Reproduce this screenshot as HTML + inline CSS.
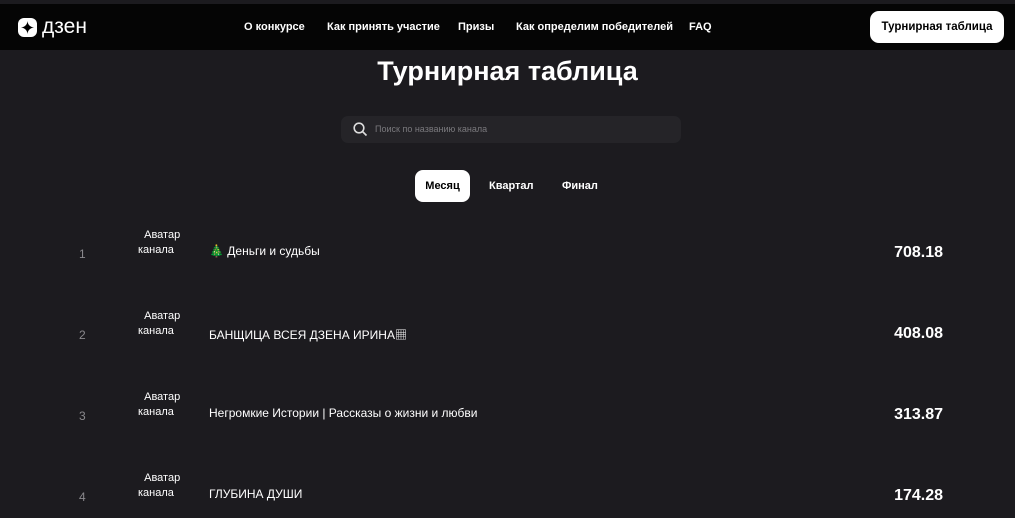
<!DOCTYPE html>
<html><head><meta charset="utf-8"><style>
*{margin:0;padding:0;box-sizing:border-box}
body{width:1015px;height:518px;overflow:hidden;background:#1c1b1f;font-family:"Liberation Sans","Noto Sans CJK SC",sans-serif;color:#fff;position:relative}
.hdr{position:absolute;left:0;top:4px;width:1015px;height:46px;background:#050505}
.logo{position:absolute;left:18px;top:14px;width:19px;height:19px;background:#fff;border-radius:6px}
.logo svg{position:absolute;left:3px;top:3px}
.lt{position:absolute;left:42px;top:11px;font-size:21px}
.nav{position:absolute;top:17px;font-size:11px;font-weight:bold}
.btn{position:absolute;left:870px;top:7px;width:134px;height:32px;background:#fff;color:#000;border-radius:9px;font-size:11.5px;font-weight:bold;text-align:center;line-height:32px}
h1{position:absolute;left:0;width:1015px;top:56px;text-align:center;font-size:27px;font-weight:bold}
.search{position:absolute;left:341px;top:116px;width:340px;height:27px;background:#252428;border-radius:7px}
.search span{position:absolute;left:34px;top:8px;font-size:9px;color:#7a797d}
.tab{position:absolute;top:180px;font-size:11px;font-weight:bold}
.act{position:absolute;left:415px;top:170px;width:55px;height:32px;background:#fff;border-radius:8px;color:#000;font-size:11px;font-weight:bold;text-align:center;line-height:32px}
.num{position:absolute;left:79px;font-size:12px;color:#8a898d}
.av{position:absolute;left:138px;font-size:11px;line-height:15px}
.nm{position:absolute;left:209px;font-size:12px}
.sc{position:absolute;right:72px;font-size:16px;font-weight:bold}
</style></head><body>
<div class="hdr">
<div class="logo"><svg width="13" height="13" viewBox="0 0 13 13"><path d="M6.5 0C6.7 3.6 9.4 6.3 13 6.5 9.4 6.7 6.7 9.4 6.5 13 6.3 9.4 3.6 6.7 0 6.5 3.6 6.3 6.3 3.6 6.5 0Z" fill="#000"/></svg></div>
<div class="lt">дзен</div>
<div class="nav" style="left:244px">О конкурсе</div>
<div class="nav" style="left:327px">Как принять участие</div>
<div class="nav" style="left:458px">Призы</div>
<div class="nav" style="left:516px">Как определим победителей</div>
<div class="nav" style="left:689px">FAQ</div>
<div class="btn">Турнирная таблица</div>
</div>
<h1>Турнирная таблица</h1>
<div class="search"><svg style="position:absolute;left:12px;top:6px" width="15" height="15" viewBox="0 0 15 15"><circle cx="6" cy="6" r="4.8" fill="none" stroke="#ddd" stroke-width="1.6"/><path d="M9.5 9.5L13.5 13.5" stroke="#ddd" stroke-width="1.6"/></svg><span>Поиск по названию канала</span></div>
<div class="act">Месяц</div>
<div class="tab" style="left:489px">Квартал</div>
<div class="tab" style="left:562px">Финал</div>

<div class="num" style="top:247px">1</div>
<div class="av" style="top:228px">&nbsp;&nbsp;Аватар<br>канала</div>
<div class="nm" style="top:244px">🎄 Деньги и судьбы</div>
<div class="sc" style="top:244px">708.18</div>

<div class="num" style="top:328px">2</div>
<div class="av" style="top:309px">&nbsp;&nbsp;Аватар<br>канала</div>
<div class="nm" style="top:326px">БАНЩИЦА ВСЕЯ ДЗЕНА ИРИНА▦</div>
<div class="sc" style="top:325px">408.08</div>

<div class="num" style="top:409px">3</div>
<div class="av" style="top:390px">&nbsp;&nbsp;Аватар<br>канала</div>
<div class="nm" style="top:406px">Негромкие Истории | Рассказы о жизни и любви</div>
<div class="sc" style="top:406px">313.87</div>

<div class="num" style="top:490px">4</div>
<div class="av" style="top:471px">&nbsp;&nbsp;Аватар<br>канала</div>
<div class="nm" style="top:487px">ГЛУБИНА ДУШИ</div>
<div class="sc" style="top:487px">174.28</div>
</body></html>
